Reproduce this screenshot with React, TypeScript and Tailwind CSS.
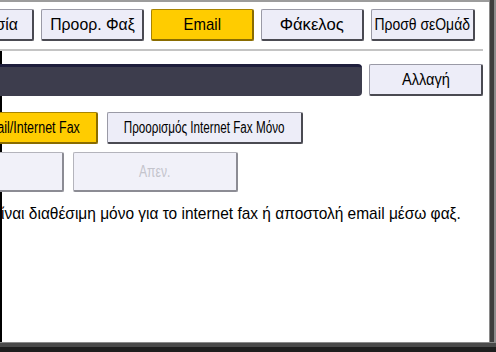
import React from 'react';

const font = "font-['Liberation_Sans','DejaVu_Sans',sans-serif]";

// panel text is drawn narrow, like the printer's condensed face
function Narrow({
  children,
  className = 'scale-x-[0.93]'
}: {
  children?: React.ReactNode;
  className?: string;
}) {
  return <span className={`inline-block whitespace-nowrap ${className}`}>{children}</span>;
}

function PanelButton({
  children,
  className = ''
}: {
  children?: React.ReactNode;
  className?: string;
}) {
  return <div className={`flex items-center justify-center shrink-0 bg-[#ededf8] text-black border border-t-[#9a9aa6] border-l-[#9a9aa6] border-r-[#4a4a52] border-b-[#4a4a52] border-r-2 border-b-2 rounded-[2px] ${className}`}>
      {children}
    </div>;
}

function YellowButton({
  children,
  className = ''
}: {
  children?: React.ReactNode;
  className?: string;
}) {
  return <div className={`flex items-center justify-center shrink-0 bg-[#ffcc00] text-black border border-[#a88400] border-r-2 border-b-2 border-r-[#8a6c00] border-b-[#8a6c00] rounded-[2px] ${className}`}>
      {children}
    </div>;
}

function DisabledButton({
  children,
  className = ''
}: {
  children?: React.ReactNode;
  className?: string;
}) {
  return <div className={`flex items-center justify-center shrink-0 bg-[#f1f1f9] text-[#c4c4cc] border border-[#b4b4bc] border-r-2 border-b-2 border-r-[#8c8c94] border-b-[#8c8c94] rounded-[2px] ${className}`}>
      {children}
    </div>;
}

export default function App() {
  return <div className={`w-[496px] h-[352px] overflow-hidden bg-white flex flex-col ${font}`}>
      <div className="flex flex-1 min-h-0">
        <div className="flex-1 min-w-0 flex flex-col border-t-2 border-[#9c9c9c]">
          {/* top tabs */}
          <div className="flex gap-[7px] mt-[7px] h-[32px] text-[17px] leading-none">
            <PanelButton className="w-[103px] ml-[-69px] !justify-end pr-[14px]">
              <Narrow className="scale-x-[0.93] origin-right">Επεξεργασία</Narrow>
            </PanelButton>
            <PanelButton className="w-[103px]"><Narrow>Προορ. Φαξ</Narrow></PanelButton>
            <YellowButton className="w-[103px]"><Narrow className="scale-x-[0.88]">Email</Narrow></YellowButton>
            <PanelButton className="w-[103px]"><Narrow className="scale-x-[0.98]">Φάκελος</Narrow></PanelButton>
            <PanelButton className="w-[104px]"><Narrow className="scale-x-[0.82]">Προσθ σεΟμάδ</Narrow></PanelButton>
          </div>
          <div className="mt-[8px] mr-[6px] h-[2px] bg-[#c4c4c4]" />

          <div className="flex-1 flex flex-col border-l-2 border-black">
            {/* address field */}
            <div className="flex gap-[7px] mt-[13px] h-[32px] mr-[6px] text-[17px] leading-none">
              <div className="w-[362px] ml-[-2px] bg-[#3d3d4d] border-t-[3px] border-[#1e1e3c] rounded-r-[4px]" />
              <PanelButton className="flex-1"><Narrow className="scale-x-[0.86]">Αλλαγή</Narrow></PanelButton>
            </div>

            {/* type selection */}
            <div className="flex gap-[9px] mt-[16px] h-[32px] text-[16px] leading-none">
              <YellowButton className="w-[136px] ml-[-40px] !justify-end pr-[16px]">
                <Narrow className="scale-x-[0.78] origin-right">Email/Internet Fax</Narrow>
              </YellowButton>
              <PanelButton className="w-[196px]"><Narrow className="scale-x-[0.73]">Προορισμός Internet Fax Μόνο</Narrow></PanelButton>
            </div>

            <div className="flex gap-[9px] mt-[8px] h-[40px] text-[16px] leading-none">
              <DisabledButton className="w-[166px] ml-[-104px]" />
              <DisabledButton className="w-[165px]"><Narrow className="scale-x-[0.76]">Απεν.</Narrow></DisabledButton>
            </div>

            <p className="mt-[12px] ml-[-1px] text-[17px] leading-[20px] text-black">
              <Narrow className="scale-x-[0.91] origin-left">ίναι διαθέσιμη μόνο για το internet fax ή αποστολή email μέσω φαξ.</Narrow>
            </p>
          </div>
        </div>
        <div className="w-[7px] flex">
          <div className="w-[1px] bg-[#8a8a8a]" />
          <div className="w-[4px] bg-[#3e3e3e]" />
          <div className="w-[2px] bg-[#8c8c8c]" />
        </div>
      </div>
      <div className="h-[10px] flex flex-col">
        <div className="h-[1px] bg-[#8a8a8a]" />
        <div className="h-[4px] bg-[#4a4a4a]" />
        <div className="h-[5px] bg-[#1e1e1e]" />
      </div>
    </div>;
}
